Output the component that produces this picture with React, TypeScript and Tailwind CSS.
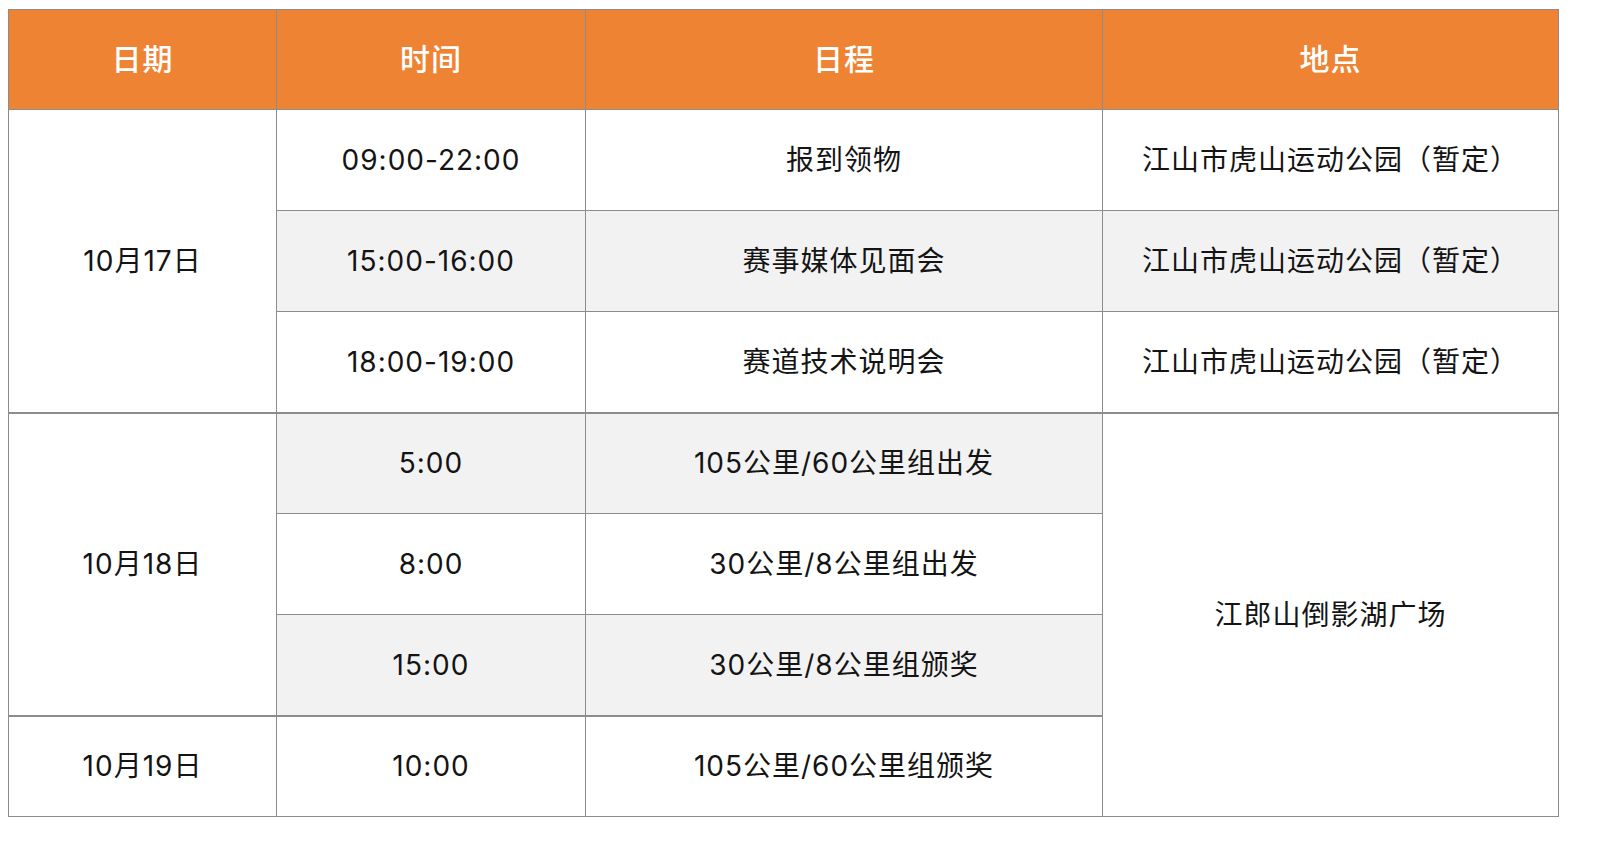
const rows = [
  { date: "10月17日", dateSpan: 3, time: "09:00-22:00", item: "报到领物", place: "江山市虎山运动公园（暂定）", placeSpan: 1, gray: false },
  { time: "15:00-16:00", item: "赛事媒体见面会", place: "江山市虎山运动公园（暂定）", placeSpan: 1, gray: true },
  { time: "18:00-19:00", item: "赛道技术说明会", place: "江山市虎山运动公园（暂定）", placeSpan: 1, gray: false },
  { date: "10月18日", dateSpan: 3, time: "5:00", item: "105公里/60公里组出发", place: "江郎山倒影湖广场", placeSpan: 4, gray: true, groupTop: true },
  { time: "8:00", item: "30公里/8公里组出发", gray: false },
  { time: "15:00", item: "30公里/8公里组颁奖", gray: true },
  { date: "10月19日", dateSpan: 1, time: "10:00", item: "105公里/60公里组颁奖", gray: false, groupTop: true },
];

export default function App() {
  const cell = "border border-[#8c8c8c] text-center align-middle";
  return (
    <div
      className="min-h-screen bg-white pt-[9px] pl-2 text-[28px] tracking-[1px] text-[#141414]"
      style={{ fontFamily: 'Inter, "Noto Sans CJK SC", "Noto Sans", sans-serif' }}
    >
      <table className="w-[1550px] table-fixed border-collapse">
        <colgroup>
          <col className="w-[268px]" />
          <col className="w-[309px]" />
          <col className="w-[517px]" />
          <col className="w-[456px]" />
        </colgroup>
        <thead>
          <tr className="h-[100px] bg-[#ee8433] text-[30px] text-white">
            <th className={`${cell} font-medium`}>日期</th>
            <th className={`${cell} font-medium`}>时间</th>
            <th className={`${cell} font-medium`}>日程</th>
            <th className={`${cell} font-medium`}>地点</th>
          </tr>
        </thead>
        <tbody>
          {rows.map((r) => {
            const bg = r.gray ? "bg-[#f2f2f2]" : "bg-white";
            const top = r.groupTop ? "border-t-2" : "";
            return (
              <tr key={r.time} className="h-[101px]">
                {r.date && (
                  <td rowSpan={r.dateSpan} className={`${cell} ${top} bg-white`}>
                    {r.date}
                  </td>
                )}
                <td className={`${cell} ${top} ${bg}`}>{r.time}</td>
                <td className={`${cell} ${top} ${bg}`}>{r.item}</td>
                {r.place && (
                  <td
                    rowSpan={r.placeSpan}
                    className={`${cell} ${top} ${r.placeSpan === 1 ? bg : "bg-white"}`}
                  >
                    {r.place}
                  </td>
                )}
              </tr>
            );
          })}
        </tbody>
      </table>
    </div>
  );
}
